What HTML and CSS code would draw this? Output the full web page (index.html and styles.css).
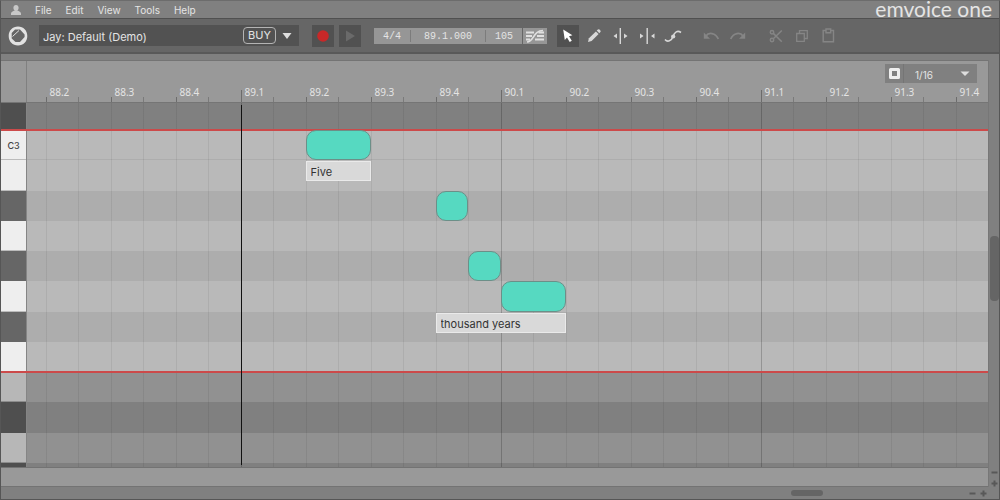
FILE: index.html
```html
<!DOCTYPE html>
<html lang="en">
<head>
  <meta charset="UTF-8">
  <meta name="viewport" content="width=device-width, initial-scale=1.0">
  <title>Emvoice One</title>
  <link rel="stylesheet" href="styles.css">
</head>
<body>
<div class="app">
  <header class="menubar">
    <button type="button" class="account" aria-label="Account">
      <svg width="10" height="10" viewBox="0 0 10 10"><path d="M5 0C6.6 0 7.6 1.2 7.6 2.8S6.6 6 5 6S2.4 4.4 2.4 2.8S3.4 0 5 0Z"/><path d="M0 10V8.6C0 7 2 6.3 3.6 5.6H6.4C8 6.3 10 7 10 8.6V10Z"/></svg>
    </button>
    <nav class="menus">
      <button type="button">File</button>
      <button type="button">Edit</button>
      <button type="button">View</button>
      <button type="button">Tools</button>
      <button type="button">Help</button>
    </nav>
    <div class="brand">emvoice one</div>
  </header>

  <div class="toolbar">
    <svg class="logo" width="20" height="20" viewBox="0 0 20 20">
      <path fill-rule="evenodd" fill="#e2e2e2" d="M10 0.5C15.5 0.5 19.3 4.5 19.3 10S15.5 19.5 10 19.5S0.7 15.5 0.7 10S4.500 0.5 10 0.5ZM7 3.600L3.700 7V12.500L7.500 16H12L16.600 11V8.500L12 3.600Z"/>
      <path d="M4.500 10.500L11 4.500" stroke="#e2e2e2" stroke-width="1"/>
    </svg>
    <div class="voice">
      <select aria-label="Voice"><option>Jay: Default (Demo)</option></select>
      <button type="button" class="buy">BUY</button>
      <svg class="arrow" width="10" height="6" viewBox="0 0 10 6"><path d="M0.5 0H9.5L5 6Z"/></svg>
    </div>
    <div class="group transport">
      <button type="button" class="tool dark" aria-label="Record"><svg width="22" height="22" viewBox="0 0 22 22"><circle cx="11" cy="11" r="5.8" fill="#c82828"/></svg></button>
      <button type="button" class="tool dark" aria-label="Play"><svg width="22" height="22" viewBox="0 0 22 22"><path d="M7 5.5L16 11L7 16.5Z" fill="#6a6a6a"/></svg></button>
    </div>
    <div class="display">
      <input class="signature" type="text" value="4/4" aria-label="Time signature">
      <input class="position" type="text" value="89.1.000" aria-label="Position">
      <input class="tempo" type="text" value="105" aria-label="Tempo">
    </div>
    <button type="button" class="tempo-sync" aria-label="Follow host tempo">
      <svg width="20" height="14" viewBox="0 0 20 14" fill="none" stroke="#e0e0e0" stroke-width="1.8"><path d="M1 3.5H9M1 7H7M1 10.5H5M13.5 3.5H19M12 7H19M10 10.5H19"/><path d="M2 13C9 13 8 1.5 18 1.5" stroke-width="1.5"/></svg>
    </button>
    <div class="group">
      <button type="button" class="tool dark" aria-label="Select"><svg width="22" height="22" viewBox="0 0 22 22"><path d="M6.2 4.5L15.4 10.2L12 11.3L14.8 15.8L12.7 17L10 12.5L7.8 15Z" fill="#fff"/></svg></button>
      <button type="button" class="tool" aria-label="Draw"><svg width="22" height="22" viewBox="0 0 22 22" fill="#d8d8d8"><path d="M5 17L5.9 13.3L12.9 6.4L15.6 9.1L8.6 16.1Z"/><path d="M13.7 5.6L14.9 4.5Q15.7 3.9 16.5 4.6L17.4 5.5Q18.1 6.3 17.4 7.1L16.3 8.3Z"/></svg></button>
      <button type="button" class="tool" aria-label="Split"><svg width="22" height="22" viewBox="0 0 22 22" fill="#d8d8d8"><path d="M10.6 3H12V19H10.6ZM8 8.5V13.5L4.500 11ZM15 8.5V13.5L18.500 11Z"/></svg></button>
      <button type="button" class="tool" aria-label="Join"><svg width="22" height="22" viewBox="0 0 22 22" fill="#d8d8d8"><path d="M11.5 3H12.9V19H11.500ZM5 8.5V13.5L8.500 11ZM19.500 8.5V13.5L16 11Z"/></svg></button>
      <button type="button" class="tool" aria-label="Pitch curve"><svg width="22" height="22" viewBox="0 0 22 22"><path d="M4 14.500C6.500 17.500 10.500 16 12 11.500S16.500 5 20 7.500" fill="none" stroke="#d8d8d8" stroke-width="1.6"/><circle cx="12.200" cy="11.5" r="2.1" fill="#d8d8d8"/></svg></button>
    </div>
    <div class="group history">
      <button type="button" class="tool" aria-label="Undo" disabled><svg width="22" height="22" viewBox="0 0 22 22"><path d="M6 11C8.5 7.2 15.5 7.3 18.3 14" fill="none" stroke="#858585" stroke-width="1.8"/><path d="M3.8 7.4V13.7H10Z" fill="#858585"/></svg></button>
      <button type="button" class="tool" aria-label="Redo" disabled><svg width="22" height="22" viewBox="0 0 22 22"><path d="M16 11C13.5 7.2 6.5 7.3 3.7 14" fill="none" stroke="#858585" stroke-width="1.8"/><path d="M18.2 7.4V13.7H12Z" fill="#858585"/></svg></button>
    </div>
    <div class="group">
      <button type="button" class="tool" aria-label="Cut" disabled><svg width="22" height="22" viewBox="0 0 22 22" fill="none" stroke="#858585" stroke-width="1.5"><circle cx="7" cy="7.2" r="1.7"/><circle cx="7" cy="15" r="1.7"/><path d="M8.3 8.4L16.8 16.7M8.3 13.8L16.8 5.5"/></svg></button>
      <button type="button" class="tool" aria-label="Copy" disabled><svg width="22" height="22" viewBox="0 0 22 22" fill="none" stroke="#858585" stroke-width="1.3"><path d="M5.7 8.5H13.3V16.3H5.7ZM8.5 8.5V5.7H16.3V13.5H13.3"/></svg></button>
      <button type="button" class="tool" aria-label="Paste" disabled><svg width="22" height="22" viewBox="0 0 22 22" fill="none" stroke="#858585" stroke-width="1.4"><path d="M9 5.500H6.200V16.800H16.500V5.500H13.700"/><path d="M9 4H13.700V7.800H9Z"/></svg></button>
    </div>
  </div>

  <main class="editor">
    <section class="panel">
      <div class="ruler">
        <div class="corner"></div>
        <div class="timeline">
          <div class="snap">
            <button type="button" aria-label="Snap to grid"><svg width="11" height="11" viewBox="0 0 11 11"><path d="M1.5 1.5H9.5V9.5H1.5Z" fill="none" stroke="#eee" stroke-width="3" stroke-linejoin="round"/></svg></button>
            <select aria-label="Grid size"><option>1/16</option></select>
            <svg class="arrow" width="10" height="6" viewBox="0 0 10 6"><path d="M0.5 0.5H9.5L5 5Z"/></svg>
          </div>
          <div class="beats">
            <span class="lead"></span>
            <span class="beat">88.2</span>
            <span class="beat">88.3</span>
            <span class="beat">88.4</span>
            <span class="beat bar">89.1</span>
            <span class="beat">89.2</span>
            <span class="beat">89.3</span>
            <span class="beat">89.4</span>
            <span class="beat bar">90.1</span>
            <span class="beat">90.2</span>
            <span class="beat">90.3</span>
            <span class="beat">90.4</span>
            <span class="beat bar">91.1</span>
            <span class="beat">91.2</span>
            <span class="beat">91.3</span>
            <span class="beat last">91.4</span>
          </div>
        </div>
      </div>

      <div class="roll">
        <div class="keys">
          <div class="key black off"></div>
          <div class="key white">C3</div>
          <div class="key white"></div>
          <div class="key black"></div>
          <div class="key white"></div>
          <div class="key black"></div>
          <div class="key white"></div>
          <div class="key black"></div>
          <div class="key white"></div>
          <div class="key white off"></div>
          <div class="key black off"></div>
          <div class="key white off"></div>
          <div class="key black off"></div>
        </div>
        <div class="lanes">
          <div class="lane black off"></div>
          <div class="lane white octave"></div>
          <div class="lane white"></div>
          <div class="lane black"></div>
          <div class="lane white"></div>
          <div class="lane black"></div>
          <div class="lane white"></div>
          <div class="lane black"></div>
          <div class="lane white"></div>
          <div class="lane white off"></div>
          <div class="lane black off"></div>
          <div class="lane white off"></div>
          <div class="lane black off"></div>
        </div>
        <div class="gridlines">
          <span class="lead"></span>
          <span class="line"></span>
          <span class="line"></span>
          <span class="line"></span>
          <span class="line bar"></span>
          <span class="line"></span>
          <span class="line"></span>
          <span class="line"></span>
          <span class="line bar"></span>
          <span class="line"></span>
          <span class="line"></span>
          <span class="line"></span>
          <span class="line bar"></span>
          <span class="line"></span>
          <span class="line"></span>
          <span class="line last"></span>
        </div>
        <div class="limits">
          <div class="limit high"></div>
          <div class="limit low"></div>
        </div>
        <div class="notes">
          <div class="playhead"></div>
          <div class="note five"></div>
          <input class="lyric five-lyric" type="text" value="Five" aria-label="Lyric">
          <div class="note thou"></div>
          <div class="note sand"></div>
          <div class="note years"></div>
          <input class="lyric thousand-lyric" type="text" value="thousand years" aria-label="Lyric">
        </div>
      </div>
      <div class="strip"></div>
    </section>

    <div class="scroll-y">
      <div class="track"><div class="thumb"></div></div>
      <button type="button" class="zoom" aria-label="Zoom out vertically"><svg width="7" height="7" viewBox="0 0 7 7"><path d="M0.5 3.5H6.5"/></svg></button>
      <button type="button" class="zoom" aria-label="Zoom in vertically"><svg width="7" height="7" viewBox="0 0 7 7"><path d="M0.5 3.5H6.5M3.5 0.5V6.5"/></svg></button>
    </div>
    <div class="scroll-x">
      <div class="track"><div class="thumb"></div></div>
      <button type="button" class="zoom" aria-label="Zoom out horizontally"><svg width="7" height="7" viewBox="0 0 7 7"><path d="M0.5 3.5H6.5"/></svg></button>
      <button type="button" class="zoom" aria-label="Zoom in horizontally"><svg width="7" height="7" viewBox="0 0 7 7"><path d="M0.5 3.5H6.5M3.5 0.5V6.5"/></svg></button>
    </div>
  </main>
</div>
</body>
</html>
```
FILE: styles.css
```css
:root {
  /* half-beat columns and semitone rows, shared by ruler and roll */
  --columns: minmax(0, 37fr) repeat(28, minmax(0, 65fr)) minmax(0, 65fr);
  --rows: minmax(0, 89fr) repeat(11, minmax(0, 100fr)) minmax(0, 13fr);
}

* {
  box-sizing: border-box;
}

body {
  margin: 0;
  font-family: Inter, "Liberation Sans", sans-serif;
  font-size: 11px;
  color: #e4e4e4;
}

button, input, select {
  font: inherit;
  color: inherit;
  background: none;
  border: none;
  border-radius: 0;
  margin: 0;
  padding: 0;
  min-width: 0;
}

select {
  appearance: none;
}

svg {
  display: block;
}

.app {
  display: flex;
  flex-direction: column;
  height: 100vh;
  background: #808080;
  border: 1px solid #565656;
  border-top-color: #6c6c6c;
}

/* menu bar */
.menubar {
  display: flex;
  align-items: center;
  height: 17px;
  padding: 0 7px 0 10px;
}

.account {
  fill: #c8c8c8;
}

.menus {
  display: flex;
  gap: 14px;
  margin-left: 14px;
  font-size: 10px;
  flex: 1;
}

.brand {
  font-family: Lato, sans-serif;
  font-size: 21px;
  line-height: 16px;
  padding-bottom: 2px;
}

/* toolbar */
.toolbar {
  display: flex;
  align-items: center;
  height: 36px;
  padding-left: 7px;
  background: #666;
  border-top: 1px solid #505050;
  border-bottom: 2px solid #595959;
}

.voice {
  display: grid;
  grid-template-columns: 1fr auto auto;
  align-items: center;
  column-gap: 6px;
  width: 260px;
  height: 21px;
  margin-left: 11px;
  padding-right: 7px;
  background: #525252;
}

.voice select {
  grid-area: 1 / 1 / 2 / 4;
  height: 21px;
  padding: 2px 0 0 4px;
}

.buy {
  grid-area: 1 / 2;
  width: 33px;
  height: 17px;
  line-height: 15px;
  border: 1px solid #b4b4b4;
  border-radius: 4px;
}

.arrow {
  fill: #dedede;
  pointer-events: none;
}

.voice .arrow {
  grid-area: 1 / 3;
}

.group {
  display: flex;
  gap: 4px;
  margin-left: 16px;
}

.transport {
  gap: 5px;
  margin-left: 13px;
}

.history {
  gap: 5px;
  margin-left: 17px;
}

.tool {
  width: 22px;
  height: 22px;
}

.dark {
  background: #515151;
}

.display {
  display: flex;
  align-items: center;
  height: 16px;
  margin-left: 13px;
  background: #969696;
  font-family: "Liberation Mono", monospace;
  font-size: 10px;
}

.display input {
  height: 12px;
  padding-top: 1px;
  text-align: center;
}

.signature {
  width: 36px;
}

.display .position {
  width: 76px;
  border-left: 1px solid #7c7c7c;
  border-right: 1px solid #7c7c7c;
}

.tempo {
  width: 36px;
}

.tempo-sync {
  display: grid;
  place-items: center;
  width: 24px;
  height: 16px;
  margin-left: 1px;
  background: #969696;
}

.tempo-sync + .group {
  margin-left: 10px;
}

/* editor */
.editor {
  display: grid;
  grid-template-columns: 1fr 11px;
  grid-template-rows: minmax(0, 1fr) 12px;
  flex: 1;
  min-height: 0;
  padding-top: 6px;
}

.panel {
  display: flex;
  flex-direction: column;
  min-width: 0;
}

.ruler {
  display: flex;
  height: 43px;
  background: #999;
  border-top: 1px solid #747474;
  border-bottom: 1px solid #757575;
}

.corner {
  width: 26px;
  border-right: 1px solid #808080;
}

.timeline {
  display: flex;
  flex-direction: column;
  flex: 1;
}

.snap {
  display: grid;
  grid-template-columns: 19px 1fr 17px;
  align-items: center;
  align-self: flex-end;
  width: 92px;
  height: 19px;
  margin: 3px 11px 0 0;
  background: #808080;
}

.snap button {
  display: grid;
  place-items: center;
  height: 19px;
  border-right: 1px solid #757575;
}

.snap select {
  grid-area: 1 / 2 / 2 / 4;
  height: 19px;
  padding: 2px 0 0 11px;
  font-size: 10px;
}

.snap .arrow {
  grid-area: 1 / 3;
}

.beats {
  display: grid;
  grid-template-columns: var(--columns);
  flex: 1;
}

.beat {
  grid-column: span 2;
  padding: 2px 0 0 4px;
  font-family: "Noto Sans", sans-serif;
  font-size: 10px;
  line-height: 14px;
  background:
    linear-gradient(#6c6c6c, #6c6c6c) 0 100% / 1px 5px no-repeat,
    linear-gradient(#7a7a7a, #7a7a7a) 50% 100% / 1px 5px no-repeat;
}

.beat.bar {
  background-size: 1px 12px, 1px 5px;
}

.beat.last, .line.last {
  grid-column: span 1;
  background-size: 1px 5px, 0 0;
}

.roll {
  display: grid;
  grid-template-columns: 26px 1fr;
  grid-template-rows: minmax(0, 1fr);
  flex: 1;
  min-height: 0;
}

.keys, .lanes, .limits, .notes {
  display: grid;
  grid-template-rows: var(--rows);
  min-height: 0;
}

.keys {
  grid-area: 1 / 1;
  border-right: 1px solid #858585;
}

.key {
  display: grid;
  place-items: center;
  min-height: 0;
  padding-top: 2px;
  font-size: 9px;
  font-weight: 500;
  color: #444;
}

.key.white {
  background: #eee;
  border-bottom: 1px solid #bbb;
}

.key.black {
  background: #666;
}

.key.white.off {
  background: #b7b7b7;
  border-bottom-color: #8c8c8c;
}

.key.black.off {
  background: #4f4f4f;
}

.lanes, .gridlines, .notes {
  grid-area: 1 / 2;
}

.lane.white {
  background: #b9b9b9;
}

.lane.black {
  background: #adadad;
}

.lane.white.off {
  background: #919191;
}

.lane.black.off {
  background: #808080;
}

.lane.octave {
  border-bottom: 1px solid #adadad;
}

.gridlines, .notes {
  display: grid;
  grid-template-columns: var(--columns);
}

.line {
  grid-column: span 2;
  background:
    linear-gradient(#0001, #0001) 0 0 / 1px 100% no-repeat,
    linear-gradient(#0001, #0001) 50% 0 / 1px 100% no-repeat;
}

.line.bar {
  background:
    linear-gradient(#0003, #0003) 0 0 / 1px 100% no-repeat,
    linear-gradient(#0001, #0001) 50% 0 / 1px 100% no-repeat;
}

.line.last {
  background-size: 1px 100%, 0 0;
}

.limits {
  grid-area: 1 / 1 / 2 / 3;
}

/* red lines sit across the edge of the singable range */
.limit {
  height: 2px;
  margin-top: -1px;
  background: #cc4a4a;
}

.high {
  grid-row: 2;
}

.low {
  grid-row: 10;
}

.playhead {
  grid-area: 1 / 8 / 14 / 9;
  width: 1px;
  margin: 2px 0;
  background: #111;
}

.note {
  background: #56d9c1;
  border: 1px solid #6c8f88;
  border-radius: 10px;
}

.lyric {
  height: 20px;
  margin-top: 1px;
  padding: 2px 0 0 4px;
  width: 100%;
  color: #333;
  background: #d9d9d9;
  border: 1px solid #eaeaea;
}

.five {
  grid-area: 2 / 10 / 3 / 12;
}

.five-lyric {
  grid-area: 3 / 10 / 4 / 12;
}

.thou {
  grid-area: 4 / 14 / 5 / 15;
}

.sand {
  grid-area: 6 / 15 / 7 / 16;
}

.years {
  grid-area: 7 / 16 / 8 / 18;
}

.thousand-lyric {
  grid-area: 8 / 14 / 9 / 18;
}

.strip {
  height: 20px;
  background: #999;
  border-top: 1px solid #737373;
  border-bottom: 1px solid #737373;
}

/* scroll bars */
.scroll-y {
  display: flex;
  flex-direction: column;
  align-items: center;
  gap: 4px;
  border-left: 1px solid #777;
}

.track {
  display: flex;
  flex: 1;
}

.thumb {
  background: #656565;
  border-radius: 4px;
}

.scroll-y .track {
  flex-direction: column;
}

.scroll-y .thumb {
  width: 9px;
  height: 16%;
  margin-top: 176px;
}

.scroll-x {
  display: flex;
  align-items: center;
  gap: 4px;
  padding-right: 1px;
}

.scroll-x .thumb {
  width: 32px;
  height: 6px;
  margin-left: 82%;
}

.zoom {
  stroke: #585858;
  stroke-width: 2;
}
```
